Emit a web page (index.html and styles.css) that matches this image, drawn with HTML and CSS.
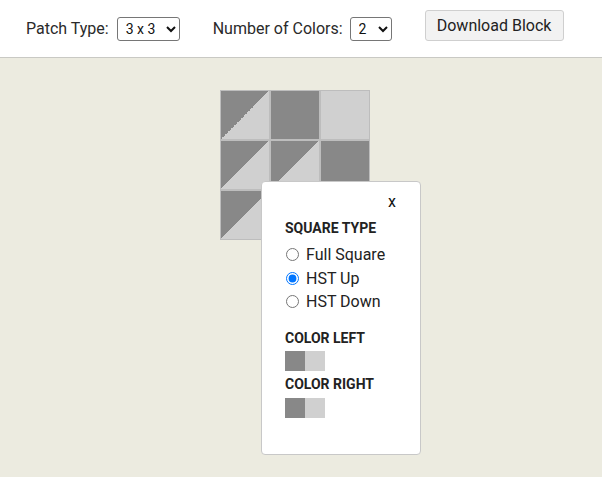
FILE: index.html
```html
<!DOCTYPE html>
<html>
<head>
<meta charset="utf-8">
<link rel="stylesheet" href="styles.css">
</head>
<body>
<header class="toolbar">
  <label class="field">Patch Type:
    <select class="sel sel-type"><option>3 x 3</option></select>
  </label>
  <label class="field">Number of Colors:
    <select class="sel sel-num"><option>2</option></select>
  </label>
  <button class="btn">Download Block</button>
</header>
<main class="stage">
  <div class="quilt">
    <div class="cell hst"></div>
    <div class="cell dark"></div>
    <div class="cell light"></div>
    <div class="cell hst"></div>
    <div class="cell hst"></div>
    <div class="cell dark"></div>
    <div class="cell hst"></div>
    <div class="cell dark"></div>
    <div class="cell light"></div>
  </div>
  <div class="popup">
    <div class="close">x</div>
    <div class="heading">SQUARE TYPE</div>
    <label class="opt"><input type="radio" name="t"> Full Square</label>
    <label class="opt"><input type="radio" name="t" checked> HST Up</label>
    <label class="opt"><input type="radio" name="t"> HST Down</label>
    <div class="heading h-left">COLOR LEFT</div>
    <div class="swatches sw-left"><span class="sw dark"></span><span class="sw light"></span></div>
    <div class="heading h-right">COLOR RIGHT</div>
    <div class="swatches sw-right"><span class="sw dark"></span><span class="sw light"></span></div>
  </div>
</main>
</body>
</html>
```
FILE: styles.css
```css
html, body {
  margin: 0;
  height: 100%;
}
body {
  font-family: Roboto, "Liberation Sans", sans-serif;
  font-size: 16px;
  color: #222;
  background: #ecebe0;
  display: flex;
  flex-direction: column;
}
.toolbar {
  background: #fff;
  height: 57px;
  border-bottom: 1px solid #c9c9c4;
  display: flex;
  align-items: center;
  padding-left: 26px;
  box-sizing: content-box;
}
.field {
  display: flex;
  align-items: center;
  color: #2a2a2a;
}
.sel {
  font-family: Roboto, "Liberation Sans", sans-serif;
  font-size: 14px;
  height: 24px;
  margin-left: 8px;
  border: 1px solid #767676;
  border-radius: 3px;
  background: #fff;
  color: #111;
  padding: 0 2px 0 4px;
}
.sel-type { width: 63px; margin-right: 33px; }
.sel-num { width: 42px; margin-left: 7px; margin-right: 33px; }
.btn {
  font-family: Roboto, "Liberation Sans", sans-serif;
  font-size: 16px;
  color: #222;
  height: 31px;
  width: 139px;
  background: #f2f2f2;
  border: 1px solid #cfcfcf;
  border-radius: 3px;
  padding: 0;
  margin-top: -6px;
}
.stage {
  flex: 1;
  position: relative;
  padding: 32px 0 0 220px;
}
.quilt {
  display: grid;
  grid-template-columns: repeat(3, 50px);
  grid-template-rows: repeat(3, 50px);
  width: 150px;
}
.cell {
  border: 1px solid #bdbdbd;
  box-sizing: border-box;
}
.dark { background: #888888; }
.light { background: #d0d0d0; }
.hst { background: linear-gradient(to bottom right, #888888 50%, #d0d0d0 50%); }
.popup {
  position: absolute;
  left: 261px;
  top: 123px;
  width: 160px;
  height: 274px;
  box-sizing: border-box;
  background: #fff;
  border: 1px solid #c8c8c8;
  border-radius: 4px;
  padding: 10px 24px 0 23px;
}
.close {
  text-align: right;
  line-height: 19px;
  height: 19px;
  color: #111;
}
.heading {
  font-weight: bold;
  font-size: 14px;
  line-height: 16px;
  color: #222;
  margin-top: 9px;
}
.opt {
  display: flex;
  align-items: center;
  height: 23.5px;
  color: #222;
}
.opt:first-of-type { margin-top: 7px; }
.opt input {
  margin: 0 7px 0 1px;
  width: 13px;
  height: 13px;
}
.h-left { margin-top: 16px; }
.h-right { margin-top: 5px; }
.swatches {
  display: flex;
  margin-top: 5px;
}
.sw-right { margin-top: 6px; }
.sw {
  width: 20px;
  height: 20px;
}
```
